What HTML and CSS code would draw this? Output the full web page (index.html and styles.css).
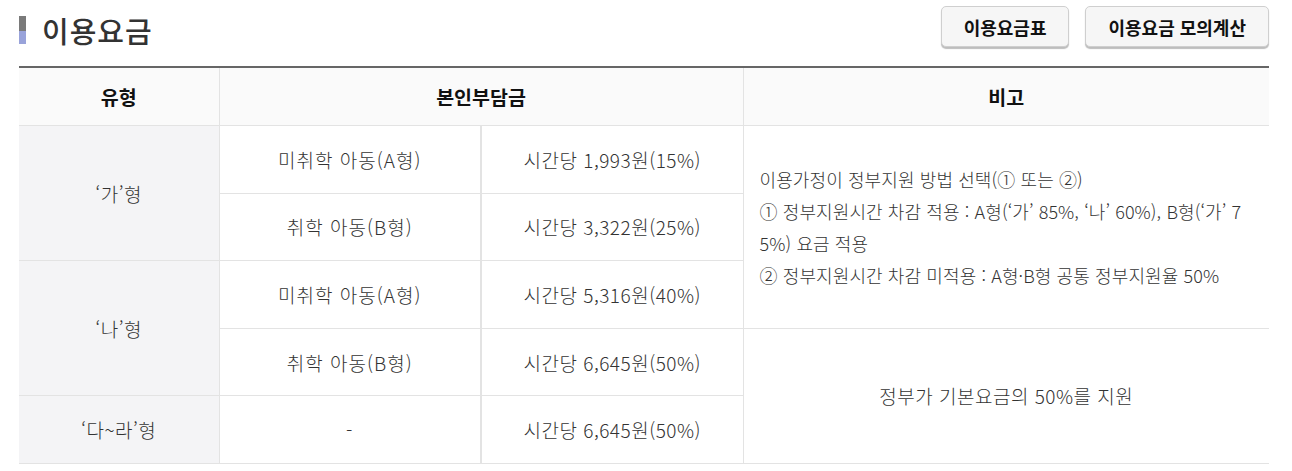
FILE: index.html
```html
<!DOCTYPE html>
<html lang="ko">
<head>
<meta charset="utf-8">
<title>이용요금</title>
<link rel="stylesheet" href="styles.css">
</head>
<body>
<div class="page">
  <div class="head">
    <h2 class="title"><span class="bar"></span>이용요금</h2>
    <div class="btns">
      <button class="btn" type="button">이용요금표</button>
      <button class="btn" type="button">이용요금 모의계산</button>
    </div>
  </div>
  <table class="fee">
    <colgroup>
      <col class="c1"><col class="c2"><col class="c3"><col class="c4">
    </colgroup>
    <thead>
      <tr>
        <th>유형</th>
        <th colspan="2">본인부담금</th>
        <th>비고</th>
      </tr>
    </thead>
    <tbody>
      <tr>
        <td class="type" rowspan="2">‘가’형</td>
        <td class="kid">미취학 아동(A형)</td>
        <td class="amt">시간당 1,993원(15%)</td>
        <td class="note" rowspan="3">이용가정이 정부지원 방법 선택(① 또는 ②)<br>① 정부지원시간 차감 적용 : A형(‘가’ 85%, ‘나’ 60%), B형(‘가’ 75%) 요금 적용<br>② 정부지원시간 차감 미적용 : A형·B형 공통 정부지원율 50%</td>
      </tr>
      <tr>
        <td class="kid">취학 아동(B형)</td>
        <td class="amt">시간당 3,322원(25%)</td>
      </tr>
      <tr>
        <td class="type" rowspan="2">‘나’형</td>
        <td class="kid">미취학 아동(A형)</td>
        <td class="amt">시간당 5,316원(40%)</td>
      </tr>
      <tr>
        <td class="kid">취학 아동(B형)</td>
        <td class="amt">시간당 6,645원(50%)</td>
        <td class="note2" rowspan="2">정부가 기본요금의 50%를 지원</td>
      </tr>
      <tr>
        <td class="type">‘다~라’형</td>
        <td class="kid">-</td>
        <td class="amt">시간당 6,645원(50%)</td>
      </tr>
    </tbody>
  </table>
</div>
</body>
</html>
```

FILE: styles.css
```css
html, body {
  margin: 0;
  padding: 0;
  background: #fff;
}
body {
  font-family: "Noto Sans CJK KR", "Noto Sans", sans-serif;
  color: #333;
}
.page {
  width: 1250px;
  margin-left: 19px;
  padding-top: 6px;
}
.head {
  display: flex;
  justify-content: space-between;
  align-items: flex-start;
  height: 60px;
}
.title {
  display: flex;
  align-items: center;
  gap: 16px;
  margin: 10px 0 0;
  font-size: 29px;
  letter-spacing: 1px;
  font-weight: 500;
  color: #333;
  line-height: 28px;
}
.bar {
  width: 7px;
  height: 28px;
  background: linear-gradient(#7a7a7a 0 55%, #99a3da 55% 100%);
}
.btns {
  display: flex;
  gap: 16px;
}
.btn {
  height: 41px;
  padding: 0 22px;
  border: 1px solid #cfcfcf;
  border-radius: 5px;
  background: #f6f6f6;
  box-shadow: 0 2px 1px #bdbdbd;
  font-family: inherit;
  font-size: 18px;
  font-weight: 700;
  color: #111;
}
.fee {
  width: 1250px;
  border-collapse: collapse;
  table-layout: fixed;
  border-top: 2px solid #666;
}
.c1 { width: 200px; }
.c2 { width: 262px; }
.c3 { width: 262px; }
.c4 { width: 526px; }
.fee th {
  height: 57px;
  padding: 0;
  background: #fafafa;
  font-size: 19.5px;
  font-weight: 700;
  color: #111;
  border-bottom: 1px solid #e3e3e3;
  border-left: 1px solid #e3e3e3;
}
.fee th:first-child { border-left: none; }
.fee td {
  height: 66.6px;
  padding: 0;
  text-align: center;
  font-size: 19px;
  letter-spacing: 0.5px;
  font-weight: 300;
  color: #333;
  border-bottom: 1px solid #e3e3e3;
  border-left: 1px solid #e3e3e3;
}
.fee td.kid {
  letter-spacing: 1px;
}
.fee td.type {
  background: #f4f4f6;
  border-left: none;
}
.fee td.amt {
  border-left: 2px solid #e3e3e3;
}
.fee td.note {
  text-align: left;
  padding: 0 10px 0 16px;
  line-height: 32px;
  font-size: 18px;
  letter-spacing: 0.1px;
  word-break: break-all;
}
```
